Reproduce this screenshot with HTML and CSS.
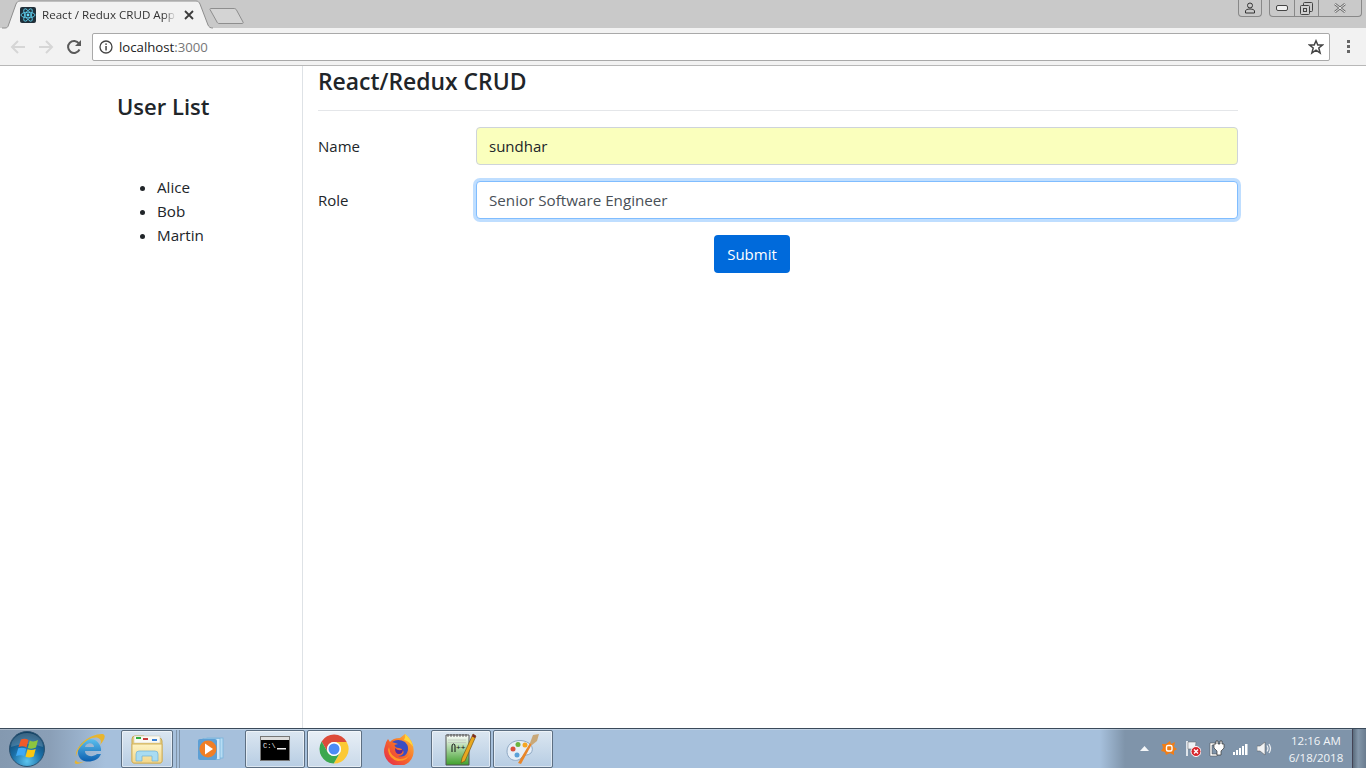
FILE: index.html
```html
<!DOCTYPE html>
<html lang="en">
<head>
<meta charset="utf-8">
<title>React / Redux CRUD App</title>
<link rel="stylesheet" href="styles.css">
</head>
<body>
<div class="screen">
  <header class="chrome">
    <div class="tabstrip">
      <div class="tab">
        <svg class="tab-shape" width="211" height="29" viewBox="0 0 211 29"><path d="M0 28H3C5 28 6 27 6.500 25L14 4C15 2 16 1 18 1H194C196 1 197 2 198 4L206 25C207 27 208 28 211 28" fill="#f2f2f2" stroke="#8e8e8e"/></svg>
        <svg class="favicon" width="16" height="16" viewBox="0 0 16 16"><rect width="16" height="16" rx="2" fill="#20303a"/><g fill="none" stroke="#61dafb" stroke-width=".8"><ellipse cx="8" cy="8" rx="7" ry="2.800"/><ellipse cx="8" cy="8" rx="7" ry="2.800" transform="rotate(60 8 8)"/><ellipse cx="8" cy="8" rx="7" ry="2.800" transform="rotate(120 8 8)"/></g><circle cx="8" cy="8" r="1.400" fill="#61dafb"/></svg>
        <span class="tab-title">React / Redux CRUD App</span>
        <svg class="tab-close" width="10" height="10" viewBox="0 0 10 10"><path d="M1 1L9 9M9 1L1 9" stroke="#3c3c3c" stroke-width="1.800"/></svg>
      </div>
      <svg class="newtab" width="36" height="18" viewBox="0 0 36 18"><path d="M1.500 1.500H25C26 1.500 27 2 27.500 3L34 15C34.500 16 34 16.500 33 16.500H10C9 16.500 8.500 16 8 15L1 2.500C.8 2 1 1.500 1.500 1.500Z" fill="#d4d4d4" stroke="#8e8e8e"/></svg>
      <div class="winctl">
        <div class="winbtn profile"><svg width="12" height="12" viewBox="0 0 12 12"><circle cx="6" cy="3.500" r="2.500" fill="none" stroke="#333"/><path d="M1.500 11V9C1.500 8 3 7 6 7S10.500 8 10.500 9V11Z" fill="none" stroke="#333"/></svg></div>
        <div class="wingroup">
          <div class="winbtn min"><svg width="12" height="6" viewBox="0 0 12 6"><rect x=".5" y=".5" width="11" height="5" rx="1.500" fill="#f0f0f0" stroke="#444"/></svg></div>
          <div class="winbtn max"><svg width="13" height="13" viewBox="0 0 13 13"><rect x="3.500" y=".5" width="9" height="9" rx="1" fill="none" stroke="#444"/><rect x=".5" y="3.500" width="9" height="9" rx="1" fill="#d0d0d0" stroke="#444"/><rect x="3.500" y="6.500" width="3" height="3" fill="none" stroke="#444"/></svg></div>
          <div class="winbtn close"><svg width="14" height="10" viewBox="0 0 14 10"><path d="M2 1L12 9M12 1L2 9" stroke="#666" stroke-width="2.400"/><path d="M2 1L12 9M12 1L2 9" stroke="#eee" stroke-width="1"/></svg></div>
        </div>
      </div>
    </div>
    <div class="toolbar">
      <svg class="nav" width="16" height="16" viewBox="0 0 16 16"><path d="M15 8H2M8 2L2 8L8 14" fill="none" stroke="#d6d6d6" stroke-width="2"/></svg>
      <svg class="nav" width="16" height="16" viewBox="0 0 16 16"><path d="M1 8H14M8 2L14 8L8 14" fill="none" stroke="#d6d6d6" stroke-width="2"/></svg>
      <svg class="nav" width="16" height="16" viewBox="0 0 16 16"><path d="M13.500 10.500A6 6 0 1 1 13 4.500" fill="none" stroke="#5a5a5a" stroke-width="2"/><path d="M15 1V7H9Z" fill="#5a5a5a"/></svg>
      <div class="omnibox">
        <svg class="info" width="14" height="14" viewBox="0 0 14 14"><circle cx="7" cy="7" r="6" fill="none" stroke="#444" stroke-width="1.300"/><rect x="6.300" y="6" width="1.500" height="4.500" fill="#444"/><rect x="6.300" y="3.400" width="1.500" height="1.500" fill="#444"/></svg>
        <span class="host">localhost</span><span class="port">:3000</span>
        <svg class="star" width="16" height="16" viewBox="0 0 16 16"><path d="M8 1.800L9.800 6H14.500L10.800 9L12.100 14L8 11.200L3.900 14L5.200 9L1.500 6H6.200Z" fill="none" stroke="#444" stroke-width="1.500"/></svg>
      </div>
      <div class="menu"><i></i><i></i><i></i></div>
    </div>
  </header>

  <main class="page">
    <aside class="sidebar">
      <h2 class="side-title">User List</h2>
      <ul class="users">
        <li>Alice</li>
        <li>Bob</li>
        <li>Martin</li>
      </ul>
    </aside>
    <section class="content">
      <h1 class="page-title">React/Redux CRUD</h1>
      <hr class="rule">
      <form class="form">
        <div class="row">
          <label class="label" for="name">Name</label>
          <input class="input autofilled" id="name" value="sundhar">
        </div>
        <div class="row">
          <label class="label" for="role">Role</label>
          <input class="input focused" id="role" value="Senior Software Engineer">
        </div>
        <div class="actions"><button class="submit" type="button">Submit</button></div>
      </form>
    </section>
  </main>

  <footer class="taskbar">
    <div class="orb"><svg width="38" height="38" viewBox="0 0 38 38"><defs><radialGradient id="orbg" cx=".5" cy=".85" r=".85"><stop offset="0" stop-color="#5cc4ee"/><stop offset=".5" stop-color="#1a6ea6"/><stop offset="1" stop-color="#0e3c5e"/></radialGradient></defs><circle cx="19" cy="19" r="17.500" fill="url(#orbg)" stroke="#2c5270"/><path d="M3 17A16 14 0 0 1 35 17Q19 11 3 17Z" fill="#fff" opacity=".18"/><path d="M13 9.500Q17 8 20.500 10L18.500 17.500Q15 15.500 10.500 17Z" fill="#ef5a2a"/><path d="M21.800 10.500Q25.500 12.500 30 10L28 17.500Q24 19.500 19.800 18Z" fill="#8cc63f"/><path d="M10.200 18.300Q14.500 17 18.200 18.800L16.200 26Q12.500 24.500 8 26Z" fill="#3fa9f5"/><path d="M19.500 19.300Q23.500 21 27.700 19L25.700 26.500Q21.500 28.500 17.500 26.800Z" fill="#fdc70f"/></svg></div>
    <div class="pin ie"><svg width="34" height="32" viewBox="0 0 34 32"><defs><linearGradient id="ieg" x1="0" y1="0" x2="0" y2="1"><stop offset="0" stop-color="#5cc0ee"/><stop offset="1" stop-color="#0c5fb0"/></linearGradient></defs><path d="M17 6A11 11 0 0 1 29 18H13C13 23 20 25 25 21H29C26 29 15 30 10 27C3 22 5 9 17 6ZM13 14H22C22 9 14 9 13 14Z" fill="url(#ieg)"/><path d="M4 27C0 32 6 32 13 28C10 29 5 31 4 27ZM4 24C2 14 18 0 31 1C34 2 33 7 28 12C31 6 26 3 20 5C12 8 5 16 4 24Z" fill="#e8b52e"/></svg></div>
    <div class="task explorer"><svg width="32" height="30" viewBox="0 0 32 30"><defs><linearGradient id="fold" x1="0" y1="0" x2="0" y2="1"><stop offset="0" stop-color="#fdf3c4"/><stop offset="1" stop-color="#f2d78a"/></linearGradient></defs><path d="M1 5Q1 2 4 2H13L15 4H28Q31 4 31 7V27Q31 29 29 29H3Q1 29 1 27Z" fill="#e9cf7c" stroke="#c8a850"/><rect x="3" y="2" width="26" height="7" fill="#fafaf4" stroke="#c8c0a0" stroke-width=".5"/><rect x="5" y="3" width="5" height="2" fill="#2fae3f"/><rect x="12" y="4" width="5" height="2" fill="#c83c3c"/><rect x="21" y="5" width="5" height="2" fill="#3b82d6"/><path d="M1 10H31V27Q31 29 29 29H3Q1 29 1 27Z" fill="url(#fold)" stroke="#d4b35e"/><path d="M5 27V20Q5 17 8 17H24Q27 17 27 20V27H21V22H11V27Z" fill="#a8dcf2" stroke="#6fb0d4" stroke-width=".7"/></svg></div>
    <div class="divider"></div>
    <div class="pin wmp"><svg width="26" height="24" viewBox="0 0 26 24"><rect x="9" y="1" width="16" height="20" fill="#b6dcf4" stroke="#78b4dc" stroke-width=".8"/><rect x="5" y="1.500" width="17" height="21" fill="#cfe8f8" stroke="#78b4dc" stroke-width=".8"/><rect x="0" y="2" width="19" height="21" rx="2" fill="#5d9fd4"/><circle cx="10" cy="12" r="8.500" fill="#f07f26"/><path d="M7 6.500L15 12L7 17.500Z" fill="#fff"/></svg></div>
    <div class="task cmd"><svg width="30" height="25" viewBox="0 0 30 25"><rect x=".5" y=".5" width="29" height="24" fill="#000" stroke="#777"/><rect x="1" y="1" width="28" height="3" fill="#ddd"/><text x="3" y="12" class="cmdtext">C:\</text><rect x="17" y="12" width="9" height="1.500" fill="#eee"/></svg></div>
    <div class="task chrome-btn"><svg width="30" height="30" viewBox="0 0 30 30"><path d="M15 8H27.700A14.500 14.500 0 0 0 2.600 7.500L8.940 18.500A7 7 0 0 1 15 8Z" fill="#dd4b39"/><path d="M21.060 18.500L14.700 29.500A14.500 14.500 0 0 0 27.700 8H15A7 7 0 0 1 21.060 18.500Z" fill="#fcc934"/><path d="M8.940 18.500L2.600 7.500A14.500 14.500 0 0 0 14.700 29.500L21.060 18.500A7 7 0 0 1 8.940 18.500Z" fill="#3ba84f"/><circle cx="15" cy="15" r="7" fill="#fff"/><circle cx="15" cy="15" r="5.500" fill="#4c8bf5"/></svg></div>
    <div class="pin firefox"><svg width="32" height="32" viewBox="0 0 32 32"><defs><linearGradient id="ffg" x1="0" y1="1" x2="1" y2="0"><stop offset="0" stop-color="#e4234f"/><stop offset=".5" stop-color="#f6682a"/><stop offset="1" stop-color="#ffc93a"/></linearGradient></defs><path d="M5 6L7 9Q10 5 17 5L22 1Q30 7 30.500 16A14.800 14.800 0 1 1 2 13Q2.500 9 5 6Z" fill="url(#ffg)"/><path d="M22 1Q28 6 30.500 14Q26 8 21 7Q23 4 22 1Z" fill="#ffd83c"/><path d="M9 9Q15 5 22 9Q27 14 24 20Q21 25 15 23Q19 23 20.500 20Q21 16 16 15Q12 15 11.500 12L15 11Z" fill="#3a4ec2"/><path d="M12 15Q16 19 20 16Q20 21 16 21Q12 21 12 15Z" fill="#5a2a9c"/><path d="M6 14Q7 24 17 26Q26 26 28 18Q26 28 15 28Q6 26 5 17Z" fill="#ff9a26"/></svg></div>
    <div class="task npp"><svg width="32" height="34" viewBox="0 0 32 34"><defs><linearGradient id="nppg" x1="0" y1="0" x2="0" y2="1"><stop offset="0" stop-color="#fff"/><stop offset="1" stop-color="#3fa02c"/></linearGradient></defs><path d="M1 3H24V33H1Z" fill="url(#nppg)" stroke="#555"/><path d="M3 2V5M6 2V5M9 2V5M12 2V5M15 2V5M18 2V5M21 2V5" stroke="#444" stroke-width=".8"/><path d="M3 8H21M3 10.500H21" stroke="#bbb" stroke-width=".6"/><path d="M7 20V14Q7 12 8.500 12Q10 12 10 14V20" fill="none" stroke="#111" stroke-width="1"/><text x="11" y="18" class="npptext">++</text><path d="M28 2L31 4L20 29L16 31L17 26Z" fill="#e8a820" stroke="#6a4a10" stroke-width=".6"/><path d="M28 2L31 4L30 6L27 4.500Z" fill="#7a2a2a"/></svg></div>
    <div class="task paint"><svg width="34" height="30" viewBox="0 0 34 30"><path d="M1 17C1 9 10 5 18 7C26 9 28 15 25 19C22 22 19 20 16 23C12 29 1 27 1 17Z" fill="#e6eef7" stroke="#8fa9c4"/><circle cx="7" cy="15" r="2.500" fill="#d9503c"/><circle cx="12" cy="10.500" r="2.500" fill="#6cb33f"/><circle cx="19" cy="11" r="2.500" fill="#f5a623"/><circle cx="11" cy="21" r="2.500" fill="#5aa0d8"/><path d="M12 29L24 9L26 10L15 30Z" fill="#e8862a"/><path d="M24 9L27 1L33 0L31 7L26 11Z" fill="#c9a878"/></svg></div>
    <div class="tray">
      <svg class="tray-arrow" width="9" height="5" viewBox="0 0 9 5"><path d="M4.500 0L9 5H0Z" fill="#f4f6f8"/></svg>
      <svg width="16" height="15" viewBox="0 0 16 15"><path d="M1 3L5 3L9 0L10 3L14 1L13 6L16 8L13 10L13 14L9 12L5 14L4 11L0 10L2 7Z" fill="#f07d16"/><rect x="5.500" y="4.500" width="5.500" height="5.500" rx="1.500" fill="none" stroke="#fff" stroke-width="1.400"/></svg>
      <svg width="16" height="17" viewBox="0 0 16 17"><path d="M2 1V16" stroke="#fff" stroke-width="1.500"/><path d="M3 2H11L10.500 6L11 9H3Z" fill="#eef2f6" stroke="#666" stroke-width=".5"/><circle cx="11" cy="11.500" r="5" fill="#d8262c" stroke="#fff"/><path d="M9 9.500L13 13.500M13 9.500L9 13.500" stroke="#fff" stroke-width="1.400"/></svg>
      <svg width="16" height="17" viewBox="0 0 16 17"><path d="M2 3H7V5H3V14H8V16H1V3Z" fill="#fff" stroke="#444" stroke-width=".5"/><path d="M7 1H9V4H11V1H13V4H15V8L12 11V15H8V11L5 8V4H7Z" fill="#fff" stroke="#333" stroke-width=".7"/></svg>
      <svg width="16" height="12" viewBox="0 0 16 12"><rect x="0" y="9" width="2" height="3" fill="#fff"/><rect x="3" y="7" width="2" height="5" fill="#fff"/><rect x="6" y="5" width="2" height="7" fill="#fff"/><rect x="9" y="3" width="2" height="9" fill="#fff"/><rect x="12" y="1" width="2.500" height="11" fill="#fff"/></svg>
      <svg width="16" height="15" viewBox="0 0 16 15"><path d="M0 5H3L8 1V14L3 10H0Z" fill="#f0f2f4" stroke="#555" stroke-width=".5"/><path d="M10 4.500Q12 7.500 10 10.500M12 3Q15 7.500 12 12" fill="none" stroke="#f0f2f4" stroke-width="1.200"/></svg>
      <div class="clock"><span>12:16 AM</span><span>6/18/2018</span></div>
      <div class="showdesk"></div>
    </div>
  </footer>
</div>
</body>
</html>
```
FILE: styles.css
```css
* { box-sizing: border-box; }
html, body { margin: 0; height: 100%; overflow: hidden; }
body { font-family: "Open Sans", "Noto Sans", sans-serif; background: #fff; color: #212529; }
.screen { width: 1366px; height: 768px; display: flex; flex-direction: column; }

/* browser chrome */
.chrome { height: 66px; flex: none; display: flex; flex-direction: column; background: #c9c9c9; }
.tabstrip { height: 28px; flex: none; display: flex; align-items: flex-start; padding-left: 2px; position: relative; }
.tab { position: relative; width: 211px; height: 28px; display: flex; align-items: center; padding: 2px 0 0 18px; flex: none; }
.tab-shape { position: absolute; left: 0; top: 0; }
.favicon { position: relative; flex: none; }
.tab-title { position: relative; width: 133px; margin: -2px 0 0 6px; font-size: 11.600px; color: #333; white-space: nowrap; -webkit-mask-image: linear-gradient(to right, #000 122px, transparent 134px); mask-image: linear-gradient(to right, #000 122px, transparent 134px); }
.tab-close { position: relative; margin-left: 9px; flex: none; }
.newtab { margin: 7px 0 0 -4px; flex: none; }
.winctl { margin-left: auto; display: flex; gap: 7px; padding-right: 4px; align-items: flex-start; }
.winbtn { height: 17px; display: flex; align-items: center; justify-content: center; }
.profile { width: 24px; border: 1px solid #888; border-top: 0; border-radius: 0 0 4px 4px; }
.wingroup { display: flex; border: 1px solid #888; border-top: 0; border-radius: 0 0 4px 4px; height: 17px; }
.wingroup .winbtn { height: 16px; }
.min { width: 25px; border-right: 1px solid #888; }
.max { width: 24px; border-right: 1px solid #888; }
.close { width: 42px; }

.toolbar { height: 38px; flex: none; background: #f2f2f2; border-bottom: 1px solid #b8b8b8; display: flex; align-items: center; padding-left: 10px; }
.nav { flex: none; margin-right: 12px; }
.toolbar .nav:nth-child(3) { margin-right: 10px; }
.omnibox { width: 1238px; height: 28px; background: #fff; border: 1px solid #a9a9a9; border-radius: 2px; display: flex; align-items: center; padding: 0 5px 0 6px; font-size: 13.200px; flex: none; }
.info { flex: none; margin-right: 6px; }
.host { color: #222; }
.port { color: #777; }
.star { margin-left: auto; }
.menu { flex: none; margin-left: 17px; display: flex; flex-direction: column; gap: 2px; width: 4px; }
.menu i { width: 3px; height: 3px; background: #666; display: block; }

/* page */
.page { flex: 1; min-height: 0; display: flex; background: #fff; }
.sidebar { width: 303px; flex: none; border-right: 1px solid #dee2e6; padding-top: 24px; }
.side-title { margin: 0 0 0 117px; font-size: 22px; line-height: 32px; font-weight: 600; color: #212529; }
.users { margin: 53px 0 0; padding: 0 0 0 157px; font-size: 15.200px; line-height: 24px; }
.content { width: 935px; padding-left: 15px; flex: none; }
.page-title { margin: -1px 0 0; font-size: 22.900px; font-weight: 600; line-height: 33px; }
.rule { margin: 12px 0 16px; border: 0; border-top: 1px solid #e4e6e9; }
.form { display: flex; flex-direction: column; gap: 16px; }
.row { display: flex; align-items: center; }
.label { width: 158px; flex: none; font-size: 15px; }
.input { flex: 1; min-width: 0; height: 38px; padding: 0 12px; font: 15.200px "Open Sans", sans-serif; border: 1px solid #ced4da; border-radius: 4px; color: #495057; outline: 0; background: #fff; }
.autofilled { background: #faffbd; color: #212529; font-size: 15px; }
.focused { border-color: #80bdff; box-shadow: 0 0 0 3px rgba(0, 123, 255, .25); }
.actions { display: flex; padding-left: 396px; }
.submit { height: 38px; width: 76px; background: #006adb; color: #fff; border: 0; border-radius: 4px; font: 15px "Open Sans", sans-serif; padding: 0; }

/* taskbar */
.taskbar { height: 40px; flex: none; display: flex; align-items: center; padding-left: 8px; background: linear-gradient(90deg, #8499b0 0, #8a9fb7 50px, #a6c0dc 105px, #a6c0dc 1100px, #7f94aa 1125px, #7f94aa 100%); border-top: 1px solid #3a4a5a; box-shadow: inset 0 1px 0 rgba(255,255,255,.3); }
.orb { width: 38px; height: 38px; flex: none; margin-right: 24px; }
.pin { display: flex; align-items: center; justify-content: center; flex: none; }
.ie { width: 38px; margin-right: 13px; }
.task { height: 38px; display: flex; align-items: center; justify-content: center; flex: none; border: 1px solid #5d6f82; border-radius: 2px; background: linear-gradient(#dbe6f1, #b7cde3); box-shadow: inset 0 0 0 1px rgba(255,255,255,.5); }
.explorer { width: 52px; }
.divider { width: 4px; height: 38px; margin: 0 5px 0 3px; border-left: 1px solid #7f93a8; border-right: 1px solid #7f93a8; flex: none; }
.wmp { width: 50px; margin-right: 10px; padding-left: 2px; }
.cmd { width: 60px; margin-right: 2px; }
.chrome-btn { width: 55px; background: linear-gradient(#e8eff6, #c9d9e9); margin-right: 8px; padding-right: 2px; }
.firefox { width: 58px; margin-right: 3px; }
.npp { width: 60px; margin-right: 2px; }
.paint { width: 60px; }
.cmdtext { font: 7px "Liberation Mono", monospace; fill: #eee; }
.npptext { font: 8px "Liberation Sans", sans-serif; fill: #111; }
.tray { margin-left: auto; height: 38px; width: 226px; display: flex; align-items: center; gap: 8px; flex: none; color: #fff; }
.tray svg { flex: none; }
.tray-arrow { margin-right: 4px; }
.clock { margin-left: 8px; width: 54px; display: flex; flex-direction: column; align-items: center; white-space: nowrap; font: 11.500px/17px "Open Sans", sans-serif; color: #f2f5f8; flex: none; }
.showdesk { width: 14px; height: 39px; margin-left: auto; background: linear-gradient(90deg, #5a6b7c, #8497aa 40%, #6a7c8f); flex: none; border-left: 1px solid #445; }
```
